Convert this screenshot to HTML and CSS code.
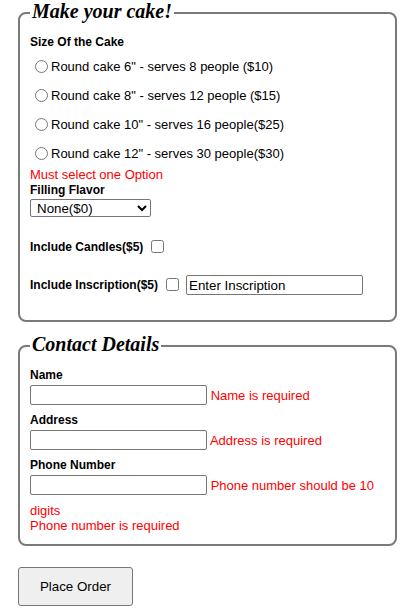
FILE: index.html
```html
<!DOCTYPE html>
<html lang="en">
<head>
<meta charset="utf-8">
<title>Make your cake</title>
<link rel="stylesheet" href="styles.css">
</head>
<body>
<form class="order-form">
  <fieldset class="panel panel-cake">
    <legend class="panel-title">Make your cake!</legend>
    <div class="group-label">Size Of the Cake</div>
    <div class="options">
      <label class="option"><input type="radio" name="size" class="radio"><span>Round cake 6" - serves 8 people ($10)</span></label>
      <label class="option"><input type="radio" name="size" class="radio"><span>Round cake 8" - serves 12 people ($15)</span></label>
      <label class="option"><input type="radio" name="size" class="radio"><span>Round cake 10" - serves 16 people($25)</span></label>
      <label class="option"><input type="radio" name="size" class="radio"><span>Round cake 12" - serves 30 people($30)</span></label>
    </div>
    <div class="error error-block">Must select one Option</div>
    <div class="group-label label-tight">Filling Flavor</div>
    <select class="select">
      <option>None($0)</option>
    </select>
    <div class="check-row candles">
      <span class="group-label">Include Candles($5)</span>
      <input type="checkbox" class="check">
    </div>
    <div class="check-row inscription">
      <span class="group-label">Include Inscription($5)</span>
      <input type="checkbox" class="check check-ins">
      <input type="text" class="text-input" value="Enter Inscription">
    </div>
  </fieldset>

  <fieldset class="panel panel-contact">
    <legend class="panel-title">Contact Details</legend>
    <div class="group-label field-label">Name</div>
    <div class="field-row"><input type="text" class="text-input"> <span class="error">Name is required</span></div>
    <div class="group-label field-label">Address</div>
    <div class="field-row"><input type="text" class="text-input"> <span class="error">Address is required</span></div>
    <div class="group-label field-label">Phone Number</div>
    <div class="field-row"><input type="text" class="text-input"> <span class="error">Phone number should be 10 digits</span></div>
    <div class="error error-line">Phone number is required</div>
  </fieldset>

  <button type="button" class="submit">Place Order</button>
</form>
</body>
</html>
```

FILE: styles.css
```css
html, body {
  margin: 0;
  padding: 0;
  background: #ffffff;
}

body {
  font-family: "Liberation Sans", Arial, sans-serif;
  font-size: 13px;
  color: #000000;
}

.order-form {
  padding: 0 12px 0 18px;
}

.panel {
  box-sizing: border-box;
  width: 379px;
  margin: 0;
  border: 2px solid #7a7a7a;
  border-radius: 8px;
  padding: 9px 10px 25px;
  min-inline-size: 0;
}

.panel-contact {
  margin-top: 11px;
  padding-bottom: 11px;
}

.panel-title {
  font-family: "Liberation Serif", "Times New Roman", serif;
  font-weight: bold;
  font-style: italic;
  font-size: 20px;
  line-height: 22px;
  padding: 0 2px 4px;
  color: #000000;
}

.group-label {
  font-weight: bold;
  font-size: 12px;
  line-height: 14px;
}

.options {
  display: flex;
  flex-direction: column;
  gap: 14px;
  margin-top: 10px;
}

.option {
  display: flex;
  align-items: center;
  height: 15px;
  font-size: 13px;
  line-height: 15px;
}

.radio {
  width: 13px;
  height: 13px;
  margin: 0 3px 0 5px;
}

.error {
  color: #ff0000;
  font-size: 13px;
  line-height: 15px;
}

.error-block {
  margin-top: 6px;
}

.label-tight {
  margin-top: 1px;
}

.select {
  display: block;
  margin-top: 2px;
  width: 121px;
  height: 18px;
  font-family: "Liberation Sans", Arial, sans-serif;
  font-size: 13.33px;
  padding: 0 0 0 2px;
  border: 1px solid #767676;
  border-radius: 2px;
  background: #ffffff;
  color: #000000;
}

.check-row {
  display: flex;
  align-items: center;
}

.candles {
  margin-top: 23px;
  height: 14px;
}

.inscription {
  margin-top: 21px;
  height: 20px;
}

.check {
  width: 13px;
  height: 13px;
  margin: 0 0 1px 8px;
}

.check-ins {
  margin-right: 7px;
}

.text-input {
  box-sizing: border-box;
  width: 177px;
  height: 20px;
  margin: 0;
  padding: 1px 2px;
  border: 1px solid #767676;
  border-radius: 2px;
  font-family: "Liberation Sans", Arial, sans-serif;
  font-size: 13.33px;
  color: #000000;
  background: #ffffff;
}

.field-label {
  margin-bottom: 3px;
}

.field-row {
  font-size: 13px;
  line-height: 15px;
}

.field-row .text-input {
  vertical-align: baseline;
  margin-bottom: 8px;
}

.submit {
  display: block;
  box-sizing: border-box;
  margin-top: 21px;
  width: 115px;
  height: 39px;
  background: #efefef;
  border: 1px solid #767676;
  border-radius: 3px;
  font-family: "Liberation Sans", Arial, sans-serif;
  font-size: 13.33px;
  color: #000000;
  padding: 0;
}
```
